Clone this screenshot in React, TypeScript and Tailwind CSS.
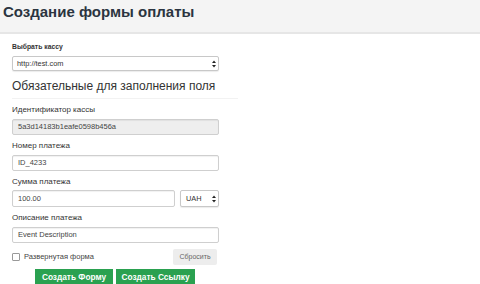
import React from 'react';

const font = { fontFamily: '"Liberation Sans", Arial, sans-serif' };

function Caret() {
  return (
    <svg width="4" height="8" viewBox="0 0 4 8" className="shrink-0">
      <path d="M0 3 L2 0.5 L4 3 Z" fill="#222" />
      <path d="M0 5 L2 7.5 L4 5 Z" fill="#222" />
    </svg>
  );
}

function FakeSelect({ value, className }: { value: string; className?: string }) {
  return (
    <div
      className={
        'flex items-center justify-between h-[15px] pl-[4px] pr-[2px] border border-[#c8c8c8] rounded-[2px] bg-white text-[7.4px] text-[#333] shadow-[0_1px_1px_rgba(0,0,0,0.08)] ' +
        (className ?? '')
      }
    >
      <span>{value}</span>
      <Caret />
    </div>
  );
}

function Field({ value, disabled, className }: { value: string; disabled?: boolean; className?: string }) {
  return (
    <div
      className={
        'flex items-center h-[16px] px-[5px] border border-[#cfcfcf] rounded-[2px] text-[7.5px] text-[#444] shadow-[inset_0_1px_1px_rgba(0,0,0,0.06)] ' +
        (disabled ? 'bg-[#eeeeee] ' : 'bg-white ') +
        (className ?? '')
      }
    >
      {value}
    </div>
  );
}

function Label({ children }: { children: React.ReactNode }) {
  return <div className="text-[8px] leading-[10px] text-[#333]">{children}</div>;
}

export default function App() {
  return (
    <div className="w-[480px] h-[284px] overflow-hidden bg-white" style={font}>
      {/* Page header */}
      <div className="h-[34px] bg-[#f4f4f4] border-b-2 border-[#e6e6e6] pl-[3px] pt-[3px]">
        <h1 className="text-[15px] leading-[18px] font-bold text-[#2b3440]">Создание формы оплаты</h1>
      </div>

      <div className="pl-[12px] w-[240px]">
        <div className="pt-[8px] text-[6.8px] leading-[9px] font-bold text-[#333]">Выбрать кассу</div>
        <FakeSelect value="http://test.com" className="mt-[5px] w-[207px]" />

        <div className="mt-[8px] pb-[4px] text-[12px] leading-[15px] text-[#333] w-[226px] border-b border-[#f2f2f2]">
          Обязательные для заполнения поля
        </div>

        <div className="mt-[6px]">
          <Label>Идентификатор кассы</Label>
          <Field value="5a3d14183b1eafe0598b456a" disabled className="mt-[4px] w-[207px]" />
        </div>

        <div className="mt-[6px]">
          <Label>Номер платежа</Label>
          <Field value="ID_4233" className="mt-[4px] w-[207px]" />
        </div>

        <div className="mt-[6px]">
          <Label>Сумма платежа</Label>
          <div className="mt-[3px] flex gap-[5px]">
            <Field value="100.00" className="w-[163px] h-[17px]" />
            <FakeSelect value="UAH" className="w-[39px] h-[17px] pl-[5px]" />
          </div>
        </div>

        <div className="mt-[6px]">
          <Label>Описание платежа</Label>
          <Field value="Event Description" className="mt-[4px] w-[207px]" />
        </div>

        <div className="mt-[6px] flex items-center justify-between w-[205px]">
          <div className="flex items-center gap-[4px]">
            <div className="w-[8px] h-[8px] border border-[#999] bg-white rounded-[1px]" />
            <span className="text-[7.5px] text-[#444]">Развернутая форма</span>
          </div>
          <div className="h-[16px] w-[44px] flex items-center justify-center bg-[#ededed] rounded-[2px] text-[7px] text-[#666]">
            Сбросить
          </div>
        </div>

        <div className="mt-[4px] ml-[23px] flex gap-[3px]">
          <div className="h-[17px] w-[78px] flex items-center justify-center bg-[#2aa150] text-white text-[8.3px] font-bold">
            Создать Форму
          </div>
          <div className="h-[17px] w-[79px] flex items-center justify-center bg-[#2aa150] text-white text-[8.3px] font-bold">
            Создать Ссылку
          </div>
        </div>
      </div>
    </div>
  );
}
